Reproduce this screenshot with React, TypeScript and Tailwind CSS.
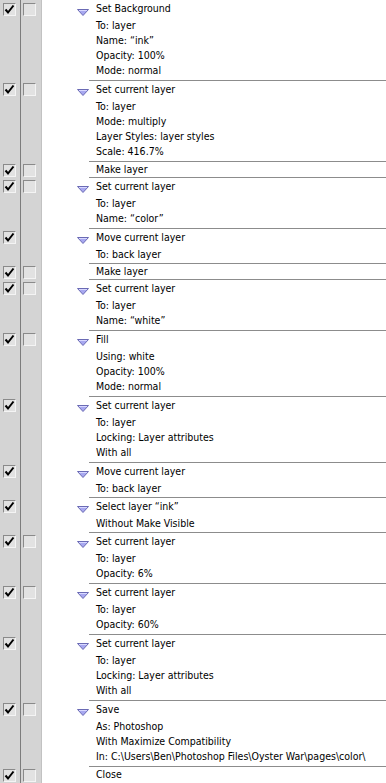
import React from 'react'

type Step = { title: string; details: string[]; open: boolean; dim?: boolean }

const steps: Step[] = [
  { title: 'Set Background', details: ['To: layer', 'Name:  \u201cink\u201d', 'Opacity: 100%', 'Mode: normal'], open: true },
  { title: 'Set current layer', details: ['To: layer', 'Mode: multiply', 'Layer Styles: layer styles', 'Scale: 416.7%'], open: true },
  { title: 'Make layer', details: [], open: false },
  { title: 'Set current layer', details: ['To: layer', 'Name:  \u201ccolor\u201d'], open: true },
  { title: 'Move current layer', details: ['To: back layer'], open: true, dim: true },
  { title: 'Make layer', details: [], open: false },
  { title: 'Set current layer', details: ['To: layer', 'Name:  \u201cwhite\u201d'], open: true },
  { title: 'Fill', details: ['Using: white', 'Opacity: 100%', 'Mode: normal'], open: true },
  { title: 'Set current layer', details: ['To: layer', 'Locking: Layer attributes', 'With all'], open: true, dim: true },
  { title: 'Move current layer', details: ['To: back layer'], open: true, dim: true },
  { title: 'Select layer \u201cink\u201d', details: ['Without Make Visible'], open: true, dim: true },
  { title: 'Set current layer', details: ['To: layer', 'Opacity: 6%'], open: true },
  { title: 'Set current layer', details: ['To: layer', 'Opacity: 60%'], open: true },
  { title: 'Set current layer', details: ['To: layer', 'Locking: Layer attributes', 'With all'], open: true, dim: true },
  { title: 'Save', details: ['As: Photoshop', 'With Maximize Compatibility', 'In: C:\\Users\\Ben\\Photoshop Files\\Oyster War\\pages\\color\\'], open: true },
  { title: 'Close', details: [], open: false },
]

function CheckBox({ checked, hidden }: { checked?: boolean; hidden?: boolean }) {
  if (hidden) return <div className="w-[13px] h-[13px]" />
  return (
    <div className="w-[13px] h-[13px] border border-t-[#8a8a8a] border-l-[#8a8a8a] border-r-[#f4f4f4] border-b-[#f4f4f4] bg-[#e2e2e2] flex items-center justify-center">
      {checked && (
        <svg width="11" height="11" viewBox="0 0 11 11">
          <path d="M1.5 5.5 L4 8.5 L9.5 1.5" fill="none" stroke="#000" strokeWidth="2" />
        </svg>
      )}
    </div>
  )
}

function Triangle() {
  return (
    <svg width="12" height="7" viewBox="0 0 12 7">
      <path d="M0.5 0.5 L11.5 0.5 L6 6.5 Z" fill="#a8a8f0" stroke="#6a6ab4" strokeWidth="1" />
      <path d="M2 1.5 L10 1.5" stroke="#d8d8ff" strokeWidth="1" />
    </svg>
  )
}

function Block({ step, first }: { step: Step; first: boolean }) {
  const pad = step.details.length >= 2 ? 'pb-[1px]' : ''
  return (
    <div className="flex">
      <div className="w-[20px] shrink-0 bg-[#d4d4d4] pl-[3px] pt-[3px]">
        <CheckBox checked />
      </div>
      <div className="w-[1px] shrink-0 bg-[#7c7c7c]" />
      <div className="w-[21px] shrink-0 bg-[#d4d4d4] border-r border-r-[#c2c2c2] pl-[2px] pt-[3px]">
        <CheckBox hidden={step.dim} />
      </div>
      <div className="w-[47px] shrink-0 bg-white pl-[35px] pt-[9px]">
        {step.open && <Triangle />}
      </div>
      <div className={`flex-1 bg-white ${first ? '' : 'border-t border-t-[#8c8c8c]'} pl-[7px] ${pad}`}>
        <div className={`${step.open ? 'h-[19px] pt-[2px]' : 'h-[15px] pt-[1px]'} leading-[13px]`}>{step.title}</div>
        {step.details.map((d, i) => (
          <div key={i} className="h-[15px] leading-[13px] whitespace-nowrap">
            {d}
          </div>
        ))}
      </div>
    </div>
  )
}

export default function App() {
  return (
    <div
      className="h-[783px] w-[386px] flex flex-col overflow-hidden text-[10.5px] text-black"
      style={{ fontFamily: '"DejaVu Sans Condensed", "DejaVu Sans", sans-serif', fontStretch: 'condensed' }}
    >
      {steps.map((s, i) => (
        <Block key={i} step={s} first={i === 0} />
      ))}
      <div className="flex flex-1">
        <div className="w-[20px] shrink-0 bg-[#d4d4d4]" />
        <div className="w-[1px] shrink-0 bg-[#7c7c7c]" />
        <div className="w-[21px] shrink-0 bg-[#d4d4d4] border-r border-r-[#c2c2c2]" />
        <div className="flex-1 bg-white" />
      </div>
    </div>
  )
}
